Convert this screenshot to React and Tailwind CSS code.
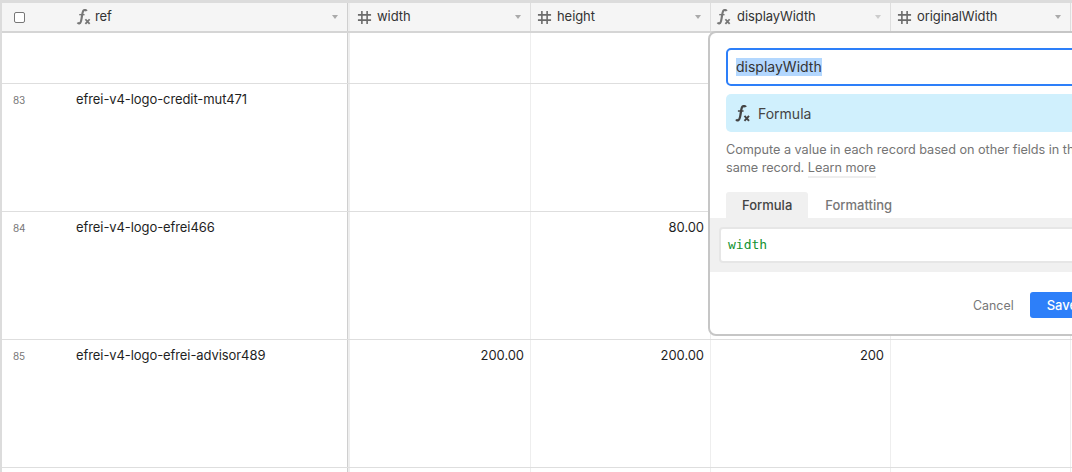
const FONT = "font-['Inter','Liberation_Sans',sans-serif]"

const COLUMNS = [
  { key: 'width', label: 'width', type: 'number', cell: 'w-[181px] pl-[7px]', caret: 'border-t-[#aaa]' },
  { key: 'height', label: 'height', type: 'number', cell: 'w-[180px] pl-[6px]', caret: 'border-t-[#aaa]' },
  { key: 'displayWidth', label: 'displayWidth', type: 'formula', cell: 'w-[180px] pl-[5px]', caret: 'border-t-[#ccc]' },
  { key: 'originalWidth', label: 'originalWidth', type: 'number', cell: 'w-[180px] pl-[6px]', caret: 'border-t-[#aaa]' },
]

const CELL_WIDTHS = {
  width: 'w-[181px]',
  height: 'w-[180px]',
  displayWidth: 'w-[180px]',
  originalWidth: 'w-[180px]',
}

const ROWS = [
  { id: '', ref: '', values: {}, height: 'h-[51px]' },
  { id: '83', ref: 'efrei-v4-logo-credit-mut471', values: {}, height: 'h-[128px]' },
  { id: '84', ref: 'efrei-v4-logo-efrei466', values: { height: '80.00' }, height: 'h-[128px]' },
  {
    id: '85',
    ref: 'efrei-v4-logo-efrei-advisor489',
    values: { width: '200.00', height: '200.00', displayWidth: '200' },
    height: 'h-[128px]',
  },
  { id: '', ref: '', values: {}, height: 'h-[128px]' },
]

function FxIcon({ className }) {
  return (
    <svg viewBox="2.500 1 13 15" className={className} fill="none" stroke="currentColor">
      <path strokeWidth="2" d="M11.500 2.800c-.6-1.100-2.600-1.300-3.400.2-.6 1.100-.9 4-1.300 6.500-.4 2.500-.8 4.500-1.900 4.900-.7.300-1.500 0-1.900-.7" />
      <path strokeWidth="1.300" d="M4.500 6.300h5" />
      <path strokeWidth="1.700" d="M10.300 10.600l4 4.400M14.300 10.600l-4 4.400" />
    </svg>
  )
}

function HashIcon() {
  return (
    <svg viewBox="0 0 16 16" className="h-[15px] w-[15px] text-[#6b6b6b]" fill="none" stroke="currentColor" strokeWidth="1.700">
      <path d="M5.200 1v14M10.800 1v14M1 5.200h14M1 10.800h14" />
    </svg>
  )
}

function HeaderCell({ column }) {
  return (
    <div className={`flex h-full items-center border-r border-[#dedede] pr-[9px] ${column.cell}`}>
      {column.type === 'formula' ? (
        <FxIcon className="h-4 w-4 text-[#777]" />
      ) : (
        <HashIcon />
      )}
      <span className="ml-[5px] flex-1 text-[13px] tracking-[-0.07px] text-[#333]">{column.label}</span>
      <span className={`h-0 w-0 border-x-[3.5px] border-t-[4px] border-x-transparent ${column.caret}`} />
    </div>
  )
}

function Row({ row }) {
  return (
    <div className={`flex border-b border-[#dedede] ${row.height}`}>
      <div className="flex w-[346px] border-r border-[#cfcfcf] pt-[6px] text-[13px] tracking-[-0.08px] text-[#1f1f1f]">
        <span className="w-[74px] pl-[11px] pt-[3px] text-[10px] text-[#777]">{row.id}</span>
        <span>{row.ref}</span>
      </div>
      <div className="w-[2px] bg-[#eeeeee]" />
      {COLUMNS.map((column) => (
        <div
          key={column.key}
          className={`border-r border-[#eeeeee] pr-[6px] pt-[6px] text-right text-[13px] tracking-[-0.07px] text-[#1f1f1f] ${CELL_WIDTHS[column.key]}`}
        >
          {row.values[column.key]}
        </div>
      ))}
    </div>
  )
}

function FieldPopover() {
  return (
    <div className="absolute left-[708px] top-[31px] h-[305px] w-[420px] rounded-[8px] border-2 border-[#c6c6c6] bg-white">
      <div className="px-[16px] pt-[15px]">
        <div className="flex h-[38px] items-center rounded-[5px] border-2 border-[#2d7ff9] pl-[8px] text-[14px] text-[#333]">
          <span className="bg-[#b3d7fe] leading-[18px]">displayWidth</span>
        </div>
        <div className="mt-[8px] flex h-[38px] items-center rounded-[5px] bg-[#d0f0fd] pl-[9px] text-[14px] text-[#444]">
          <FxIcon className="h-[17px] w-[16px] text-[#444]" />
          <span className="ml-[7px]">Formula</span>
        </div>
        <p className="mt-[9px] whitespace-nowrap text-[12.7px] leading-[18px] tracking-[-0.04px] text-[#757575]">
          Compute a value in each record based on other fields in the
          <br />
          same record.{' '}
          <span className="border-b-2 border-[#eeeeee] pb-[1px]">Learn more</span>
        </p>
      </div>
      <div className="mt-[15px] flex pl-[16px] text-[13px]">
        <div className="flex h-[26px] items-center rounded-t-[3px] bg-[#f0f0f0] px-[16px] pt-[1px] font-medium text-[#444]">Formula</div>
        <div className="flex h-[26px] items-center px-[17px] pt-[1px] font-medium text-[#777]">Formatting</div>
      </div>
      <div className="bg-[#f0f0f0] px-[9px] py-[9px]">
        <div className="flex h-[36px] items-center rounded-[4px] border-2 border-[#e6e6e6] bg-white pl-[7px] font-['DejaVu_Sans_Mono',monospace] text-[13px] text-[#11922f]">
          width
        </div>
      </div>
      <div className="mt-[20px] flex h-[26px] items-center pl-[263px]">
        <span className="pt-[2px] text-[12.4px] text-[#777]">Cancel</span>
        <div className="ml-[16px] flex h-[26px] w-[70px] items-center rounded-[3px] bg-[#2d7ff9] pl-[17px] pt-[1px] text-[13px] font-medium text-white">
          Save
        </div>
      </div>
    </div>
  )
}

export default function App() {
  return (
    <div className={`relative h-[472px] w-[1072px] overflow-hidden bg-white ${FONT}`}>
      <div className="w-[1200px] border-l-2 border-t-[3px] border-[#dcdcdc]">
        <div className="flex h-[30px] border-b-2 border-[#d5d5d5] bg-[#f5f5f5]">
          <div className="flex h-full w-[346px] items-center border-r border-[#cfcfcf]">
            <span className="ml-[12px] h-[11px] w-[11px] rounded-[2px] border border-[#777] bg-white" />
            <FxIcon className="ml-[51px] h-4 w-4 text-[#777]" />
            <span className="ml-[3px] flex-1 text-[13px] tracking-[-0.07px] text-[#333]">ref</span>
            <span className="mr-[9px] h-0 w-0 border-x-[3.5px] border-t-[4px] border-x-transparent border-t-[#aaa]" />
          </div>
          <div className="w-[2px] bg-[#eeeeee]" />
          {COLUMNS.map((column) => (
            <HeaderCell key={column.key} column={column} />
          ))}
        </div>
        {ROWS.map((row, index) => (
          <Row key={index} row={row} />
        ))}
      </div>
      <FieldPopover />
    </div>
  )
}
